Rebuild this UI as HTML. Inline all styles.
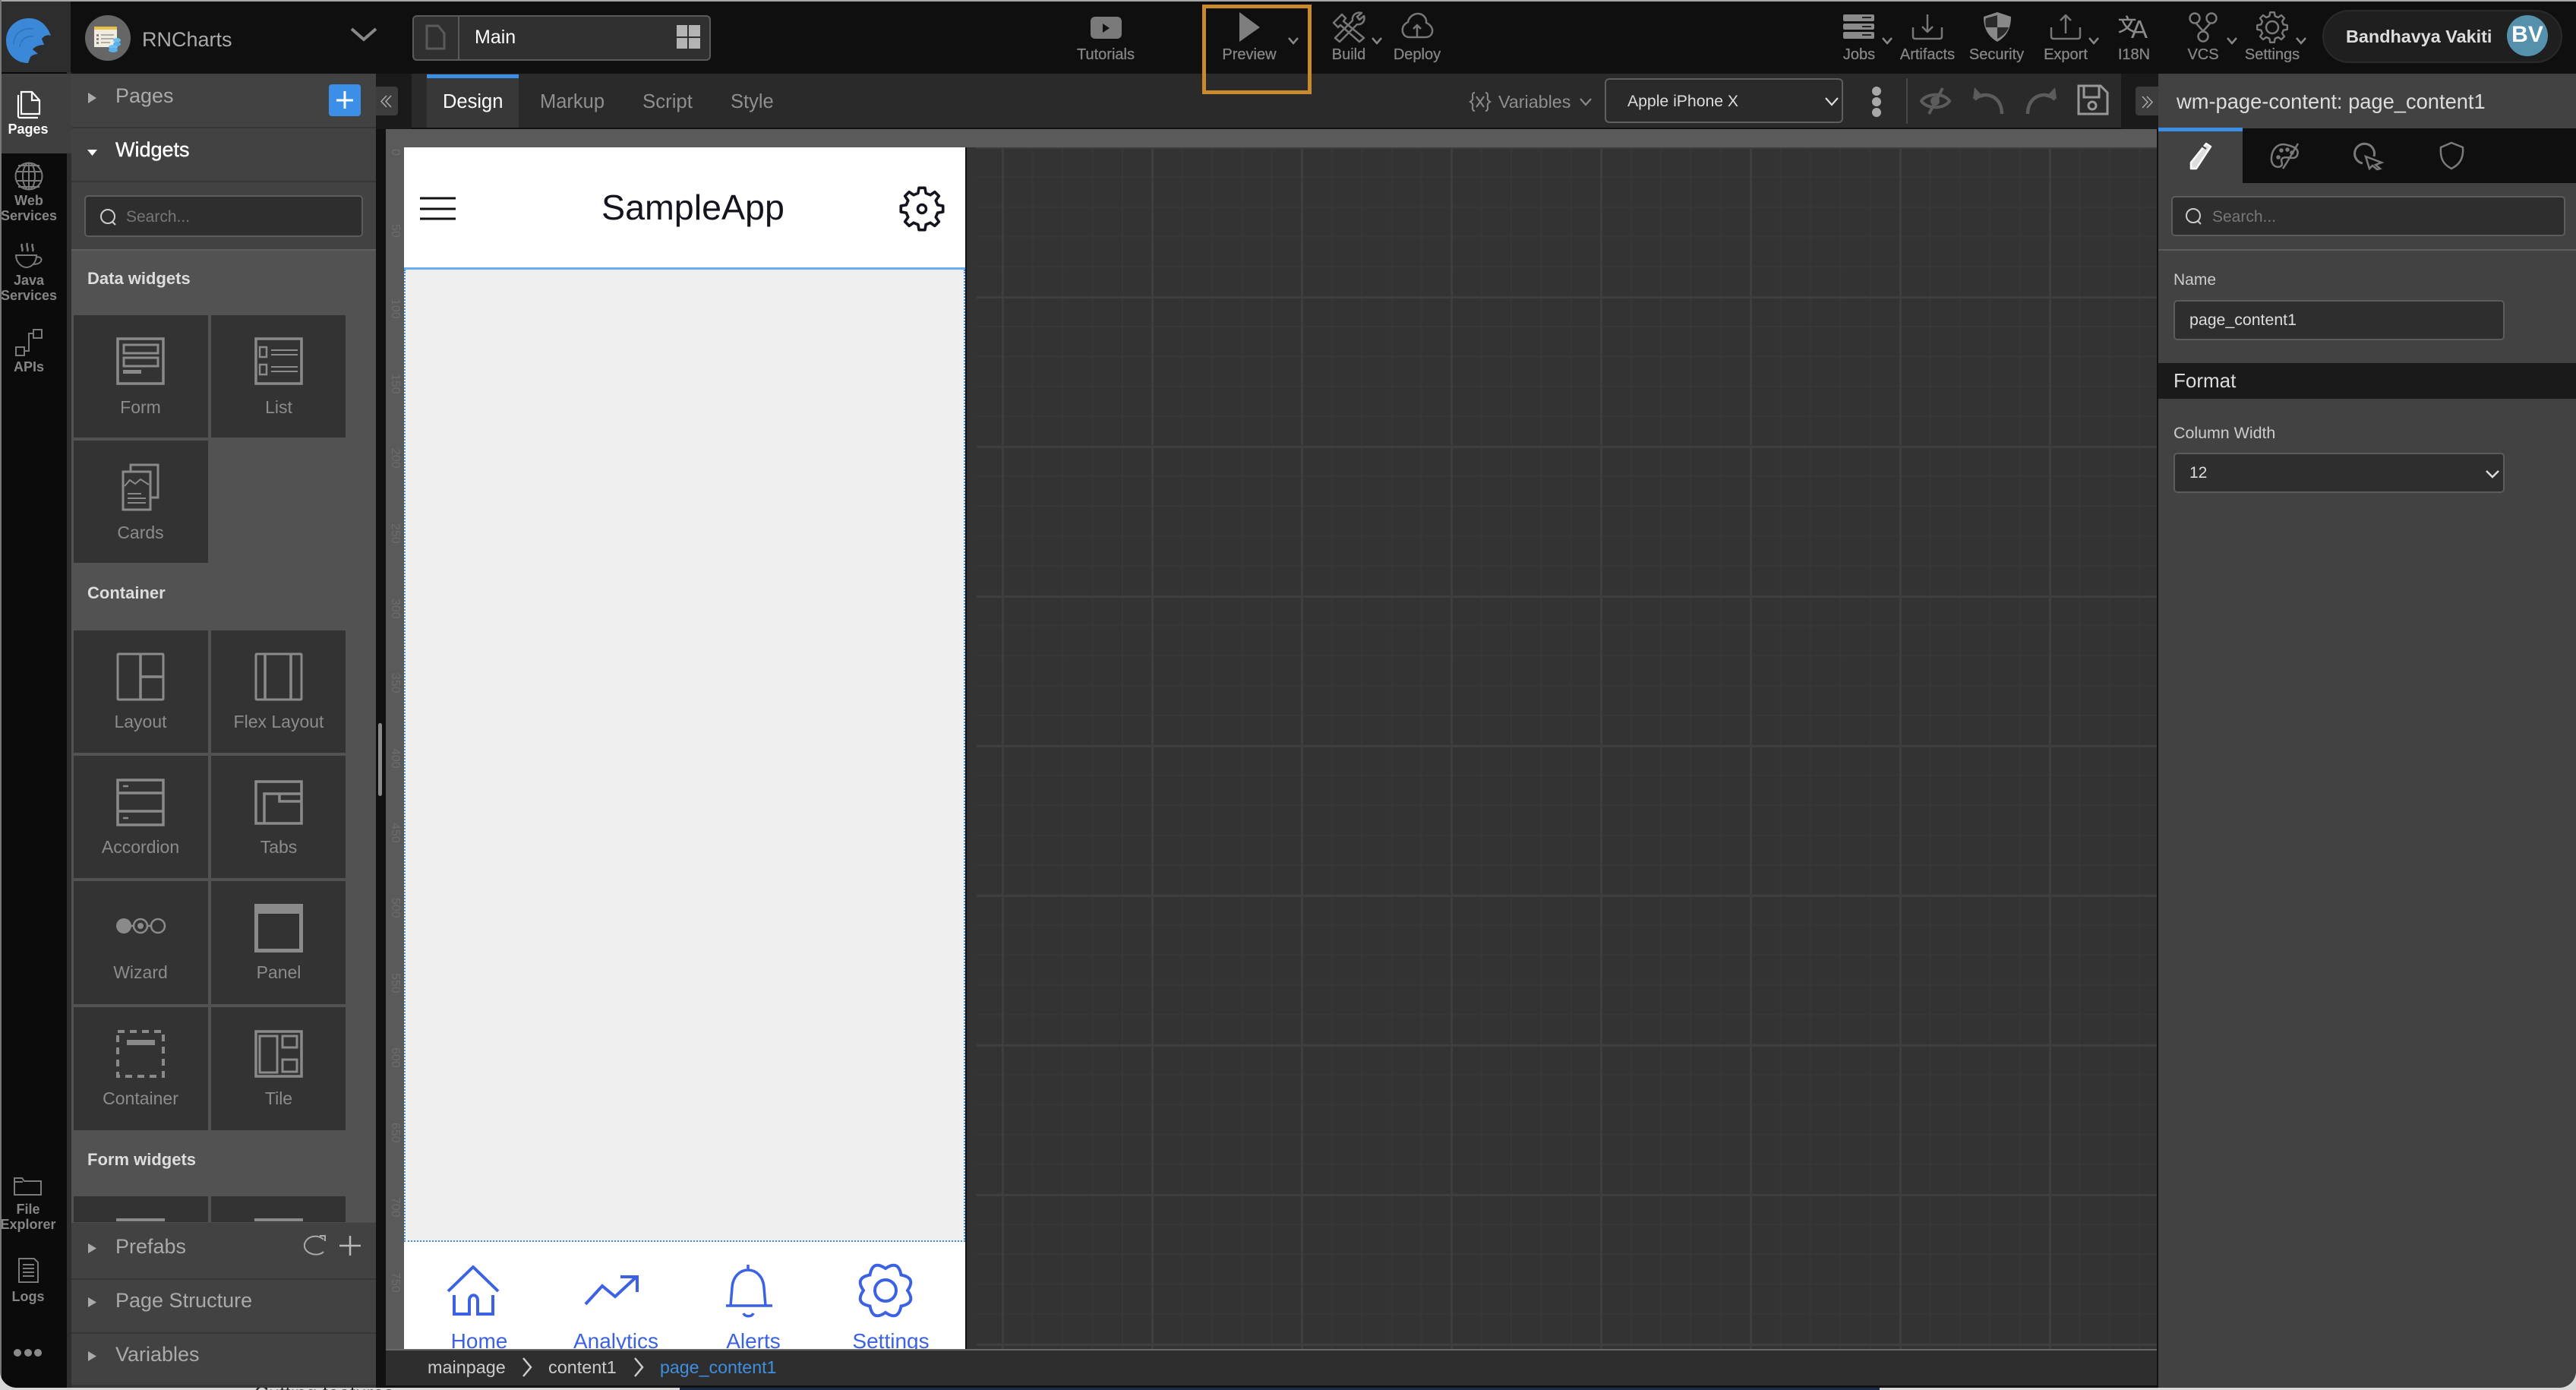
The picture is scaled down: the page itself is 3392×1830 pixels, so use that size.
<!DOCTYPE html>
<html lang="en"><head><meta charset="utf-8"><title>RNCharts – Main</title>
<style>
html,body{margin:0;padding:0;width:3392px;height:1830px;overflow:hidden;background:#d8d8d8}
*{box-sizing:border-box}
body{font-family:"Liberation Sans","Noto Sans CJK SC",sans-serif;position:relative}
.b{position:absolute}
.t{position:absolute;white-space:nowrap;line-height:0}
.c{transform:translateX(-50%)}
.m{font-size:23px;color:#8c8c8c}
.lb{font-size:18px;font-weight:bold;color:#858585}
.tb{font-size:20px;color:#858585;-webkit-text-stroke:.3px #858585}
.card{position:absolute;background:#333;width:177px}
.h{font-size:22px;font-weight:bold;color:#ddd;left:115px}
.row{font-size:27px;color:#aaa;left:152px}
.r{writing-mode:vertical-rl;position:absolute;left:512px;font-size:16px;color:#6c6c6c;line-height:16px}
#grid{position:absolute;left:1272px;top:194px;width:1568px;height:1584px;background-color:#333;
background-image:
linear-gradient(to right,#3e3e3e 3px,transparent 3px),linear-gradient(to bottom,#3e3e3e 3px,transparent 3px),
linear-gradient(to right,#373737 2px,transparent 2px),linear-gradient(to bottom,#373737 2px,transparent 2px);
background-size:197px 197px,197px 197px,39.4px 39.4px,39.4px 39.4px;
background-position:47px 0,0 196px,8px 0,0 38px}
svg{position:absolute;left:0;top:0;pointer-events:none}
</style></head><body>

<!-- bottom page strip behind window -->
<div class="b" style="left:895px;top:1826px;width:1580px;height:4px;background:#1c2b4a"></div>
<div class="t" style="left:335px;top:1834px;font-size:26px;color:#222">Cutting features</div>

<!-- window -->
<div class="b" id="win" style="left:0;top:0;width:3392px;height:1827px;background:#111;border-radius:0 0 22px 22px;overflow:hidden">
<div class="b" style="left:0;top:0;width:3392px;height:2px;background:#a8a8a8"></div>
<div class="b" style="left:0;top:0;width:2px;height:1827px;background:#777"></div>

<!-- top bar -->
<div class="b" style="left:2px;top:2px;width:3390px;height:93px;background:#0f0f0f"></div>
<div class="b" style="left:2px;top:2px;width:91px;height:93px;background:#2d2d2d"></div>
<!-- rail -->
<div class="b" style="left:2px;top:95px;width:86px;height:1732px;background:#0b0b0b"></div>
<div class="b" style="left:88px;top:95px;width:6px;height:1732px;background:#2f2f2f"></div>
<div class="b" style="left:2px;top:97px;width:92px;height:105px;background:#3f3f3f"></div>

<!-- left panel -->
<div class="b" style="left:94px;top:97px;width:401px;height:1730px;background:#424242"></div>
<div class="b" style="left:94px;top:167px;width:401px;height:2px;background:#363636"></div>
<div class="b" style="left:94px;top:238px;width:401px;height:2px;background:#363636"></div>
<div class="b" style="left:94px;top:328px;width:401px;height:1281px;background:#525252;border-top:2px solid #5e5e5e"></div>
<div class="b" style="left:111px;top:257px;width:367px;height:55px;background:#2e2e2e;border:2px solid #5c5c5c;border-radius:5px"></div>
<div class="b" style="left:433px;top:111px;width:42px;height:42px;background:#3b8fe6;border-radius:4px"></div>

<div class="card" style="left:97px;top:415px;height:161px"></div>
<div class="card" style="left:278px;top:415px;height:161px"></div>
<div class="card" style="left:97px;top:580px;height:161px"></div>
<div class="card" style="left:97px;top:830px;height:161px"></div>
<div class="card" style="left:278px;top:830px;height:161px"></div>
<div class="card" style="left:97px;top:995px;height:161px"></div>
<div class="card" style="left:278px;top:995px;height:161px"></div>
<div class="card" style="left:97px;top:1160px;height:162px"></div>
<div class="card" style="left:278px;top:1160px;height:162px"></div>
<div class="card" style="left:97px;top:1326px;height:162px"></div>
<div class="card" style="left:278px;top:1326px;height:162px"></div>
<div class="card" style="left:97px;top:1575px;height:34px"></div>
<div class="card" style="left:278px;top:1575px;height:34px"></div>
<div class="b" style="left:153px;top:1604px;width:64px;height:4px;background:#8a8a8a"></div>
<div class="b" style="left:335px;top:1604px;width:64px;height:4px;background:#8a8a8a"></div>

<div class="b" style="left:94px;top:1609px;width:401px;height:218px;background:#424242;border-top:1px solid #4c4c4c"></div>
<div class="b" style="left:94px;top:1683px;width:401px;height:2px;background:#373737"></div>
<div class="b" style="left:94px;top:1754px;width:401px;height:2px;background:#373737"></div>
<div class="b" style="left:94px;top:1823px;width:401px;height:4px;background:#383838"></div>

<!-- strip with scrollbar -->
<div class="b" style="left:495px;top:97px;width:47px;height:73px;background:#1a1a1a"></div>
<div class="b" style="left:495px;top:170px;width:13px;height:1657px;background:#111"></div>
<div class="b" style="left:498px;top:952px;width:5px;height:96px;background:#8a8a8a;border-radius:3px"></div>
<div class="b" style="left:495px;top:114px;width:29px;height:38px;background:#3c3c3c;border-radius:0 4px 4px 0"></div>

<!-- toolbar -->
<div class="b" style="left:542px;top:97px;width:2251px;height:71px;background:#2a2a2a"></div>
<div class="b" style="left:2793px;top:97px;width:49px;height:73px;background:#1a1a1a"></div>
<div class="b" style="left:2812px;top:114px;width:30px;height:38px;background:#3c3c3c;border-radius:4px 0 0 4px"></div>
<div class="b" style="left:562px;top:97px;width:121px;height:71px;background:#383838"></div>
<div class="b" style="left:562px;top:98px;width:121px;height:5px;background:#3b8fe6"></div>
<div class="b" style="left:2113px;top:103px;width:314px;height:59px;border:2px solid #5e5e5e;border-radius:6px;background:#2a2a2a"></div>
<div class="b" style="left:2510px;top:103px;width:2px;height:60px;background:#484848"></div>

<!-- Main box -->
<div class="b" style="left:543px;top:20px;width:393px;height:60px;background:#303030;border:2px solid #5a5a5a;border-radius:6px"></div>
<div class="b" style="left:603px;top:22px;width:2px;height:56px;background:#5a5a5a"></div>
<!-- user pill -->
<div class="b" style="left:3058px;top:13px;width:316px;height:70px;background:#1f1f1f;border:2px solid #2a2a2a;border-radius:35px"></div>
<div class="b" style="left:3301px;top:20px;width:54px;height:54px;background:#5591ac;border-radius:50%"></div>

<!-- canvas -->
<div class="b" style="left:508px;top:170px;width:2332px;height:24px;background:#5a5a5a"></div>
<div class="b" style="left:508px;top:194px;width:24px;height:1584px;background:#5a5a5a"></div>
<div id="grid"></div>
<div class="b" style="left:1272px;top:194px;width:14px;height:1584px;background:#333"></div>
<!-- phone -->
<div class="b" style="left:532px;top:194px;width:741px;height:1584px;background:#fff;border-right:2px solid #111"></div>
<div class="b" style="left:532px;top:352px;width:739px;height:3px;background:#6aaef0"></div>
<div class="b" style="left:532px;top:355px;width:739px;height:1280px;background:#efefef;border-left:2px dotted #3f8ee0;border-right:2px dotted #3f8ee0;border-bottom:2px dotted #3f8ee0"></div>
<!-- status -->
<div class="b" style="left:508px;top:1776px;width:2332px;height:2px;background:#666"></div>
<div class="b" style="left:508px;top:1778px;width:2332px;height:46px;background:#2e2e2e"></div>

<!-- right panel -->
<div class="b" style="left:2842px;top:97px;width:550px;height:1730px;background:#424242"></div>
<div class="b" style="left:2840px;top:170px;width:2px;height:1657px;background:#111"></div>
<div class="b" style="left:2953px;top:169px;width:439px;height:72px;background:#0f0f0f"></div>
<div class="b" style="left:2842px;top:168px;width:111px;height:5px;background:#3b8fe6"></div>
<div class="b" style="left:2859px;top:258px;width:519px;height:53px;background:#2e2e2e;border:2px solid #5c5c5c;border-radius:5px"></div>
<div class="b" style="left:2842px;top:328px;width:550px;height:2px;background:#5c5c5c"></div>
<div class="b" style="left:2862px;top:395px;width:436px;height:53px;background:#2e2e2e;border:2px solid #5c5c5c;border-radius:5px"></div>
<div class="b" style="left:2842px;top:478px;width:550px;height:47px;background:#1a1a1a"></div>
<div class="b" style="left:2862px;top:596px;width:436px;height:53px;background:#2e2e2e;border:2px solid #5c5c5c;border-radius:5px"></div>

<!-- ruler labels -->
<span class="r" style="top:196px">0</span><span class="r" style="top:295px">50</span><span class="r" style="top:393px">100</span><span class="r" style="top:492px">150</span><span class="r" style="top:590px">200</span><span class="r" style="top:689px">250</span><span class="r" style="top:788px">300</span><span class="r" style="top:886px">350</span><span class="r" style="top:985px">400</span><span class="r" style="top:1083px">450</span><span class="r" style="top:1182px">500</span><span class="r" style="top:1281px">550</span><span class="r" style="top:1379px">600</span><span class="r" style="top:1478px">650</span><span class="r" style="top:1576px">700</span><span class="r" style="top:1675px">750</span>

<!-- TEXT -->
<div class="t" style="left:187px;top:52px;font-size:27px;color:#aaa">RNCharts</div>
<div class="t" style="left:625px;top:49px;font-size:25px;color:#fff">Main</div>
<div class="t c tb" style="left:1456px;top:72px">Tutorials</div>
<div class="t c tb" style="left:1645px;top:72px">Preview</div>
<div class="t c tb" style="left:1776px;top:72px">Build</div>
<div class="t c tb" style="left:1866px;top:72px">Deploy</div>
<div class="t c tb" style="left:2448px;top:72px">Jobs</div>
<div class="t c tb" style="left:2538px;top:72px">Artifacts</div>
<div class="t c tb" style="left:2629px;top:72px">Security</div>
<div class="t c tb" style="left:2720px;top:72px">Export</div>
<div class="t c tb" style="left:2810px;top:72px">I18N</div>
<div class="t c tb" style="left:2901px;top:72px">VCS</div>
<div class="t c tb" style="left:2992px;top:72px">Settings</div>
<div class="t" style="left:3089px;top:48px;font-size:23.4px;font-weight:bold;color:#ddd">Bandhavya Vakiti</div>
<div class="t c" style="left:3328px;top:46px;font-size:30px;font-weight:bold;color:#fff">BV</div>

<div class="t" style="left:583px;top:134px;font-size:25.5px;color:#fff">Design</div>
<div class="t" style="left:711px;top:134px;font-size:25.5px;color:#8f8f8f">Markup</div>
<div class="t" style="left:846px;top:134px;font-size:25.8px;color:#8f8f8f">Script</div>
<div class="t" style="left:962px;top:134px;font-size:25.5px;color:#8f8f8f">Style</div>
<div class="t" style="left:1973px;top:134px;font-size:23.3px;color:#8f8f8f">Variables</div>
<div class="t" style="left:2143px;top:134px;font-size:21.2px;color:#ddd">Apple iPhone X</div>

<div class="t c" style="left:37px;top:170px;font-size:18px;font-weight:bold;color:#fff">Pages</div>
<div class="t c lb" style="left:38px;top:264px">Web</div>
<div class="t c lb" style="left:38px;top:284px">Services</div>
<div class="t c lb" style="left:38px;top:369px">Java</div>
<div class="t c lb" style="left:38px;top:389px">Services</div>
<div class="t c lb" style="left:38px;top:483px">APIs</div>
<div class="t c lb" style="left:37px;top:1592px">File</div>
<div class="t c lb" style="left:37px;top:1612px">Explorer</div>
<div class="t c lb" style="left:37px;top:1707px">Logs</div>

<div class="t row" style="top:126px">Pages</div>
<div class="t row" style="top:197px;color:#fff;-webkit-text-stroke:.4px #fff">Widgets</div>
<div class="t" style="left:166px;top:286px;font-size:21px;color:#777">Search...</div>
<div class="t h" style="top:367px">Data widgets</div>
<div class="t h" style="top:781px">Container</div>
<div class="t h" style="top:1527px">Form widgets</div>
<div class="t c m" style="left:185px;top:536px">Form</div>
<div class="t c m" style="left:367px;top:536px">List</div>
<div class="t c m" style="left:185px;top:701px">Cards</div>
<div class="t c m" style="left:185px;top:950px">Layout</div>
<div class="t c m" style="left:367px;top:950px">Flex Layout</div>
<div class="t c m" style="left:185px;top:1115px">Accordion</div>
<div class="t c m" style="left:367px;top:1115px">Tabs</div>
<div class="t c m" style="left:185px;top:1280px">Wizard</div>
<div class="t c m" style="left:367px;top:1280px">Panel</div>
<div class="t c m" style="left:185px;top:1446px">Container</div>
<div class="t c m" style="left:367px;top:1446px">Tile</div>
<div class="t row" style="top:1641px">Prefabs</div>
<div class="t row" style="top:1712px">Page Structure</div>
<div class="t row" style="top:1783px">Variables</div>

<div class="t" style="left:792px;top:273px;font-size:46.6px;color:#14141e">SampleApp</div>
<div style="position:absolute;left:532px;top:1740px;width:739px;height:36px;overflow:hidden">
<div class="t c" style="left:99px;top:26px;font-size:28px;color:#3b62e4">Home</div>
<div class="t c" style="left:279px;top:26px;font-size:28px;color:#3b62e4">Analytics</div>
<div class="t c" style="left:460px;top:26px;font-size:28px;color:#3b62e4">Alerts</div>
<div class="t c" style="left:641px;top:26px;font-size:28px;color:#3b62e4">Settings</div>
</div>
<div class="t" style="left:563px;top:1800px;font-size:23.4px;color:#ccc">mainpage</div>
<div class="t" style="left:722px;top:1800px;font-size:23.4px;color:#ccc">content1</div>
<div class="t" style="left:869px;top:1800px;font-size:23.2px;color:#3f8ee0">page_content1</div>

<div class="t" style="left:2866px;top:134px;font-size:27.3px;color:#ddd">wm-page-content: page_content1</div>
<div class="t" style="left:2913px;top:286px;font-size:21px;color:#777">Search...</div>
<div class="t" style="left:2862px;top:369px;font-size:21px;color:#ccc">Name</div>
<div class="t" style="left:2883px;top:421px;font-size:21.3px;color:#ddd">page_content1</div>
<div class="t" style="left:2862px;top:501px;font-size:26px;color:#ddd">Format</div>
<div class="t" style="left:2862px;top:570px;font-size:21.4px;color:#ccc">Column Width</div>
<div class="t" style="left:2883px;top:623px;font-size:21px;color:#ddd">12</div>

<!-- ICONS -->
<svg width="3392" height="1830" viewBox="0 0 3392 1830" fill="none" stroke-linecap="butt">
<defs>
<path id="gear" d="M-9.2-36.9L-7-49.5L7-49.5L9.2-36.9L19.6-32.6L30.1-39.9L39.9-30.1L32.6-19.6L36.9-9.2L49.5-7L49.5 7L36.9 9.2L32.6 19.6L39.9 30.1L30.1 39.9L19.6 32.6L9.2 36.9L7 49.5L-7 49.5L-9.2 36.9L-19.6 32.6L-30.1 39.9L-39.9 30.1L-32.6 19.6L-36.9 9.2L-49.5 7L-49.5-7L-36.9-9.2L-32.6-19.6L-39.9-30.1L-30.1-39.9L-19.6-32.6Z" stroke-linejoin="round"/>
</defs>

<!-- logo -->
<path d="M38 24C52 24 62 33 67 47C63 45 58 47 55 51C56 54 57 56 58 59C52 59 46 61 43 65C45 67 48 69 50 71C46 71 42 73 40 75L37 83C20 83 8 70 8 53C8 37 21 24 38 24Z" fill="#3b88d8"/>
<path d="M18 58C18 44 30 36 44 38M26 62C27 52 34 47 44 48" stroke="#2f72b8" stroke-width="1.5"/>
<!-- app icon -->
<ellipse cx="142" cy="50" rx="30" ry="30" fill="#666"/>
<rect x="124" y="35" width="30" height="27" fill="#f0ece0"/><rect x="124" y="35" width="30" height="4" fill="#e8c04a"/>
<path d="M133 46h17M133 51h17M133 56h12" stroke="#999" stroke-width="1.5"/><path d="M127 45h3v3h-3zM127 50h3v3h-3zM127 55h3v3h-3z" fill="#888"/>
<ellipse cx="154" cy="53" rx="5" ry="3" fill="#6cc0f0"/><ellipse cx="154" cy="58" rx="5" ry="3" fill="#5ab0ea"/>
<ellipse cx="149" cy="62" rx="6" ry="3" fill="#6cc0f0"/><ellipse cx="149" cy="66" rx="6" ry="3" fill="#5ab0ea"/>
<path d="M463 38L479 52L495 38" stroke="#888" stroke-width="4"/>

<!-- main box icons -->
<path d="M562 34H577L585 44V64H562Z" stroke="#5a5a5a" stroke-width="3"/>
<path d="M891 33h14v15h-14zM907 33h15v15h-15zM891 50h14v14h-14zM907 50h15v14h-15z" fill="#b4b4b4"/>

<!-- top toolbar -->
<rect x="1436" y="22" width="41" height="29" rx="6" fill="#7a7a7a"/><path d="M1452 31l9 6l-9 6z" fill="#111"/>
<path d="M1632 16L1659 36L1632 55Z" fill="#7e7e7e"/>
<rect x="1585.5" y="8.5" width="139" height="113" stroke="#c98a2e" stroke-width="5"/>
<g stroke="#888" stroke-width="2.5">
<path d="M1697 50L1703 57L1709 50M1807 50L1813 57L1819 50M2479 50L2485 57L2491 50M2751 50L2757 57L2763 50M2933 50L2939 57L2945 50M3024 50L3030 57L3036 50"/>
</g>
<g stroke="#777" stroke-width="2.5" stroke-linejoin="round">
<path d="M1759 27L1767 19L1772 24L1769 28L1796 50L1790 55L1765 33L1762 36L1756 30Z"/>
<path d="M1793 17C1785 15 1780 21 1781 27L1758 50L1764 55L1787 32C1793 33 1798 28 1796 21L1790 26L1787 22Z"/>
<path d="M1856 49C1848 49 1846 42 1847 37C1848 32 1852 30 1854 29C1855 22 1862 18 1867 18C1874 18 1879 24 1878 30C1883 32 1887 37 1886 42C1885 47 1881 49 1877 49ZM1866 49V33M1861 38L1866 33L1871 38"/>
<path d="M2519 36V48C2519 50 2520 51 2522 51H2554C2556 51 2557 50 2557 48V36M2538 19V42M2531 35L2538 42L2545 35"/>
<path d="M2701 36V48C2701 50 2702 51 2704 51H2736C2738 51 2739 50 2739 48V36M2720 44V20M2713 27L2720 20L2727 27"/>
</g>
<g fill="#8a8a8a">
<rect x="2427" y="19" width="41" height="9" rx="2"/><rect x="2427" y="31" width="41" height="8" rx="2"/><rect x="2427" y="42" width="41" height="9" rx="2"/>
</g>
<path d="M2452 23h12M2452 35h12M2452 46h12" stroke="#222" stroke-width="2"/>
<path d="M2612 22L2630 16L2648 22C2648 38 2642 48 2630 55C2618 48 2612 38 2612 22Z" fill="#888"/>
<path d="M2630 20V36H2615C2614 31 2614 26 2615 24ZM2630 36H2645C2643 42 2637 48 2630 51Z" fill="#2a2a2a"/>
<g stroke="#7a7a7a" stroke-width="2.5" fill="none">
<circle cx="2890" cy="24" r="6.5"/><circle cx="2912" cy="24" r="6.5"/><circle cx="2901" cy="48" r="6.5"/>
<path d="M2892 31L2901 41M2910 31L2901 41"/>
<use href="#gear" transform="translate(2992 36) scale(.4)" stroke-width="6"/>
<circle cx="2992" cy="36" r="8"/>
</g>
<text x="2789" y="41" font-size="24" fill="#8a8a8a" stroke="#8a8a8a" stroke-width=".6" font-family="'Noto Sans CJK SC',sans-serif">文</text>
<text x="2806" y="50" font-size="33" fill="#8a8a8a" font-family="'Liberation Sans',sans-serif">A</text>

<!-- toolbar row icons -->
<path d="M1942 122C1937 122 1940 129 1939 131C1938 133 1936 134 1936 134C1936 134 1938 135 1939 137C1940 139 1937 146 1942 146M1956 122C1961 122 1958 129 1959 131C1960 133 1962 134 1962 134C1962 134 1960 135 1959 137C1958 139 1961 146 1956 146M1944 127L1954 141M1954 127L1944 141" stroke="#8a8a8a" stroke-width="2"/>
<path d="M2081 130L2088 138L2095 130" stroke="#8a8a8a" stroke-width="2.2"/>
<path d="M2404 129L2412 138L2420 129" stroke="#ddd" stroke-width="2.2"/>
<circle cx="2471" cy="120" r="6" fill="#a8a8a8"/><circle cx="2471" cy="134" r="6" fill="#a8a8a8"/><circle cx="2471" cy="148" r="6" fill="#a8a8a8"/>
<g stroke="#5c5c5c" stroke-width="4">
<path d="M2530 133C2537 122 2560 122 2567 133C2560 144 2537 144 2530 133Z"/><path d="M2558 116L2540 150" stroke-width="4"/><circle cx="2548" cy="133" r="6" fill="#5c5c5c" stroke="none"/>
<path d="M2600 131C2612 119 2636 125 2636 150" stroke-width="4.5"/><path d="M2598 130L2600 115L2612 128Z" fill="#5c5c5c" stroke="none"/>
<path d="M2706 131C2694 119 2670 125 2670 150" stroke-width="4.5"/><path d="M2708 130L2706 115L2694 128Z" fill="#5c5c5c" stroke="none"/>
</g>
<path d="M2737 113H2766L2775 122V150H2737Z" stroke="#999" stroke-width="3"/><path d="M2744 113V128H2764V113" stroke="#999" stroke-width="3"/><circle cx="2755" cy="139" r="5" stroke="#999" stroke-width="3"/>
<path d="M515 126L508 133.500L515 141M509 126L502 133.500L509 141" stroke="#aaa" stroke-width="1.5"/>
<path d="M2821 127L2828 134.500L2821 142M2827 127L2834 134.500L2827 142" stroke="#aaa" stroke-width="1.5"/>

<!-- left panel triangles etc -->
<path d="M116 122L127 129L116 136Z M116 1637L127 1643.5L116 1650Z M116 1708L127 1714.5L116 1721Z M116 1779L127 1785.5L116 1792Z" fill="#aaa"/>
<path d="M115 197H128L121.5 205Z" fill="#fff"/>
<path d="M454 120V143M443 132H465" stroke="#fff" stroke-width="3"/>
<circle cx="142" cy="285" r="9" stroke="#ccc" stroke-width="2"/><path d="M148 292L152 296" stroke="#ccc" stroke-width="2"/>
<circle cx="2888" cy="284" r="9" stroke="#ccc" stroke-width="2"/><path d="M2894 291L2898 295" stroke="#ccc" stroke-width="2"/>
<path d="M426 1632C420 1625 404 1626 401 1638C399 1650 418 1656 426 1648" stroke="#aaa" stroke-width="2"/><path d="M421 1627H428V1634" stroke="#aaa" stroke-width="2"/>
<path d="M461 1627V1653M447 1640H475" stroke="#bbb" stroke-width="2.5"/>

<!-- rail icons -->
<g stroke="#fff" stroke-width="2.2"><path d="M28 121H42L52 132V150H28Z"/><path d="M24 125V153C24 154 25 155 26 155H50"/><path d="M42 121V132H52"/></g>
<g stroke="#7a7a7a" stroke-width="2">
<circle cx="38" cy="232" r="17.5"/><ellipse cx="38" cy="232" rx="8" ry="17.5"/><path d="M38 214V250M21 226H55M21 238H55M24 218H52M24 246H52"/>
<path d="M21 336H48C48 345 42 352 35 352C28 352 21 345 21 336ZM47 339C52 337 56 340 54 344C52 347 48 348 44 348"/>
<path d="M29 321C27 325 31 327 29 331M36 320C34 325 38 327 36 331M43 321C41 325 45 327 43 331" stroke-width="2.5"/>
<rect x="21" y="457" width="11" height="11"/><rect x="44" y="434" width="11" height="11"/><path d="M32 462H38V439H44"/>
<path d="M19 1552V1573H54V1555H32L29 1551H19Z"/><path d="M19 1556H30"/>
<path d="M25 1657H45L50 1662V1688H25ZM30 1665H45M30 1670H45M30 1675H45M30 1680H45"/>
</g>
<circle cx="23" cy="1781" r="5" fill="#8a8a8a"/><circle cx="37" cy="1781" r="5" fill="#8a8a8a"/><circle cx="50" cy="1781" r="5" fill="#8a8a8a"/>

<!-- widget icons -->
<g stroke="#8a8a8a" stroke-width="3.5">
<rect x="155" y="446" width="60" height="59"/><rect x="163" y="454" width="45" height="11" stroke-width="3"/><rect x="163" y="471" width="45" height="11" stroke-width="3"/><path d="M162 489.500H186" stroke-width="5"/>
<rect x="337" y="446" width="60" height="59"/><rect x="342" y="457" width="9" height="13" stroke-width="2.500"/><rect x="342" y="480" width="9" height="13" stroke-width="2.500"/><path d="M357 461H392M357 467H392M357 483H392M357 489H392" stroke-width="2"/>
<path d="M172 620V612H208V655H198" stroke-width="3"/><rect x="162" y="621" width="36" height="50" stroke-width="3"/><path d="M164 640L171 632L178 637L185 631L196 638M168 650H186M168 656H192M168 662H192" stroke-width="2"/>
<rect x="155" y="861" width="60" height="60" rx="1" stroke-width="3"/><path d="M185 861V921M185 891H215"/>
<rect x="337" y="861" width="60" height="60" rx="1" stroke-width="3"/><path d="M349 861V921M383 861V921"/>
<rect x="155" y="1027" width="60" height="59"/><path d="M155 1044H215M155 1068H215"/><path d="M162 1035H169M162 1077H169" stroke-width="2.500"/>
<rect x="337" y="1029" width="60" height="55"/><path d="M348 1084V1045H397M368 1045V1055H397"/>
<circle cx="185" cy="1219" r="9" stroke-width="2.500"/><circle cx="185" cy="1219" r="4" fill="#8a8a8a" stroke="none"/><circle cx="208" cy="1219" r="9" stroke-width="2.500"/><path d="M172 1219H176M194 1219H199" stroke-width="2.500"/>
<circle cx="163" cy="1219" r="10" fill="#8a8a8a" stroke="none"/>
<path d="M335 1190H399V1254H335ZM340 1203V1249H394V1203Z" fill="#8a8a8a" fill-rule="evenodd" stroke="none"/>
<rect x="155" y="1358" width="60" height="59" stroke-dasharray="9 7" stroke-width="4"/><path d="M167 1372.500H204" stroke-width="7"/>
<rect x="337" y="1358" width="60" height="59"/><rect x="342" y="1364" width="23" height="48" stroke-width="3"/><rect x="372" y="1364" width="19" height="15" stroke-width="3"/><rect x="372" y="1395" width="19" height="16" stroke-width="3"/>
</g>

<!-- phone header -->
<path d="M553 261H600M553 275H600M553 288H600" stroke="#111" stroke-width="3"/>
<use href="#gear" transform="translate(1214 275) scale(.56)" stroke="#14141e" stroke-width="6.500"/>
<circle cx="1214" cy="275" r="5.500" stroke="#14141e" stroke-width="3.500"/>

<!-- footer icons -->
<g stroke="#3b62e4" stroke-width="4">
<path d="M590 1700L623 1668L656 1700" stroke-linejoin="round"/>
<path d="M598 1705V1730H618V1712C618 1703 629 1703 629 1712V1730H649V1705"/>
<path d="M771 1717L793 1693L810 1707L838 1681M817 1681H839V1701"/>
<path d="M985 1665V1671M962 1719L964 1695C965 1680 975 1672 985 1672C995 1672 1005 1680 1006 1695L1008 1719M956 1719H1017M979 1729C981 1734 990 1734 992 1729" stroke-width="3.500"/>
<path transform="translate(1166 1699)" d="M0-29Q16.800-40.700 20.500-20.500Q40.700-16.800 29 0Q40.700 16.800 20.500 20.500Q16.800 40.700 0 29Q-16.800 40.700-20.500 20.500Q-40.700 16.800-29 0Q-40.700-16.800-20.500-20.500Q-16.800-40.700 0-29Z"/>
<circle cx="1166" cy="1699" r="14"/>
</g>

<!-- breadcrumb chevrons -->
<path d="M689 1788L699 1800L689 1812M836 1788L846 1800L836 1812" stroke="#ccc" stroke-width="2.500"/>

<!-- right tab icons -->
<path d="M2905 189L2911 193L2892 222L2885 222L2885 214Z" stroke="#fff" stroke-width="2.500" fill="#ddd" stroke-linejoin="round"/>
<path d="M2905 196L2899 192" stroke="#424242" stroke-width="2"/>
<g stroke="#7a7a7a" stroke-width="2.500">
<path d="M3012 191C3000 187 2992 196 2991 207C2990 216 2996 222 3003 219C3008 216 3001 211 3006 208C3012 205 3022 212 3025 204C3028 196 3020 193 3012 191Z"/>
<path d="M3026 189L3010 216L3006 222"/>
<circle cx="3000" cy="207" r="1.500" fill="#7a7a7a"/><circle cx="3004" cy="198" r="1.500" fill="#7a7a7a"/><circle cx="3012" cy="197" r="1.500" fill="#7a7a7a"/><circle cx="3018" cy="201" r="1.500" fill="#7a7a7a"/>
<path d="M3126 206A13 13 0 1 0 3111 215" stroke-width="3"/>
<path d="M3115 206L3136 214L3128 217L3134 222L3130 223L3124 218L3120 222Z" fill="#0f0f0f"/>
<path d="M3228 188L3243 194C3244 207 3240 216 3228 222C3216 216 3213 207 3214 194Z"/>
</g>
<path d="M3274 620L3282 628L3290 620" stroke="#ddd" stroke-width="2.500"/>
</svg>
</div>
</body></html>
